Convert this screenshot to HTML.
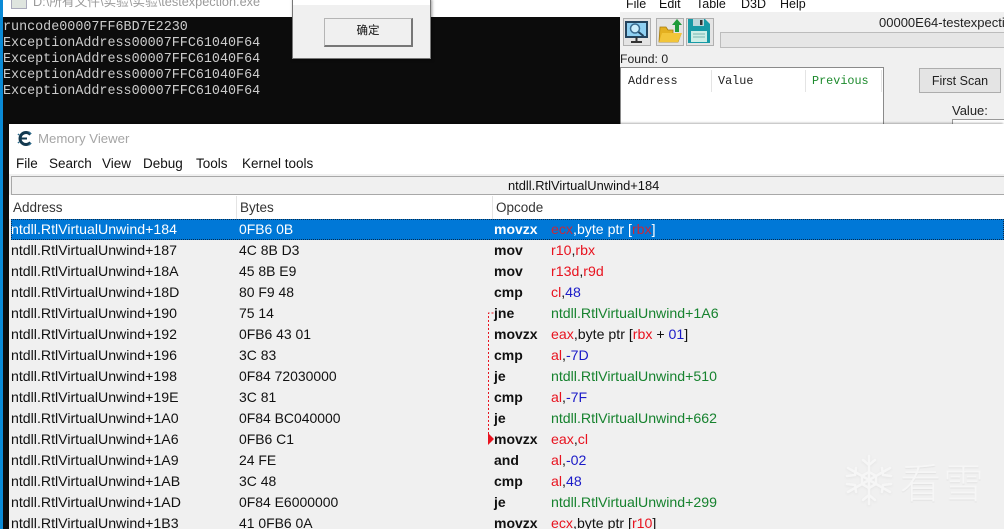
<!DOCTYPE html>
<html><head><meta charset="utf-8">
<style>
html,body{margin:0;padding:0;background:#fff}
#p{position:relative;width:1004px;height:529px;overflow:hidden;background:#0c0c0c;font-family:"Liberation Sans","Noto Sans CJK SC",sans-serif;font-size:13.5px;color:#111;filter:blur(.3px)}
.a{position:absolute}
.t{position:absolute;white-space:nowrap;line-height:16px}
.c{position:absolute;left:3px;color:#ccc;font:13.4px/16px "Liberation Mono",monospace;white-space:nowrap}
.m{position:absolute;font:11.8px/14px "Liberation Mono",monospace;white-space:nowrap}
.r{position:absolute;left:11px;width:993px;height:21px;line-height:21px;white-space:nowrap;color:#111;font-size:14.15px}
.r span{position:absolute;top:0}
.r .x{left:0}.r .y{left:228px;font-size:13.95px}.r .z{left:483px;font-weight:bold;font-size:14px}.r .w{left:540px}
.R{color:#e8131f}.B{color:#1a1ac8}.G{color:#16822e}
</style></head><body><div id="p">
<!-- console window -->
<div class="a" style="left:0;top:0;width:620px;height:17px;background:#fff"></div>
<div class="t" style="left:33px;top:-6px;color:#9a9a9a;font-size:12.7px">D:\所有文件\实验\实验\testexpection.exe</div>
<div class="a" style="left:11px;top:-4px;width:14px;height:11px;background:#dfe5df;border:1px solid #aab"></div>
<div class="c" style="top:20px">runcode00007FF6BD7E2230</div>
<div class="c" style="top:36px">ExceptionAddress00007FFC61040F64</div>
<div class="c" style="top:52px">ExceptionAddress00007FFC61040F64</div>
<div class="c" style="top:68px">ExceptionAddress00007FFC61040F64</div>
<div class="c" style="top:84px">ExceptionAddress00007FFC61040F64</div>
<div class="a" style="left:0;top:0;width:3px;height:529px;background:#0a8ad6"></div>
<!-- dialog -->
<div class="a" style="left:292px;top:-2px;width:137px;height:59px;background:#f0f0f0;border:1px solid #777;box-shadow:1px 1px 3px rgba(0,0,0,.4)"></div>
<div class="a" style="left:293px;top:-1px;width:137px;height:6px;background:#fff"></div>
<div class="a" style="left:324px;top:18px;width:86px;height:26px;background:#f0f0f0;border:1px solid #b5b5b5;border-right:2px solid #777;border-bottom:2px solid #777"></div>
<div class="t" style="left:324px;top:23px;width:88px;text-align:center;font-size:11.5px;color:#111">确定</div>
<!-- Cheat Engine -->
<div class="a" style="left:620px;top:0;width:384px;height:124px;background:#f0f0f0"></div>
<div class="a" style="left:620px;top:0;width:384px;height:12px;background:#fff"></div>
<div class="t" style="left:626px;top:-4px;font-size:12.5px">File</div>
<div class="t" style="left:659px;top:-4px;font-size:12.5px">Edit</div>
<div class="t" style="left:696px;top:-4px;font-size:12.5px">Table</div>
<div class="t" style="left:741px;top:-4px;font-size:12.5px">D3D</div>
<div class="t" style="left:780px;top:-4px;font-size:12.5px">Help</div>
<div class="a" style="left:623px;top:18px;width:26px;height:26px;background:#e4e4e4;border:1px solid #b0b0b0"></div>
<div class="a" style="left:656px;top:18px;width:26px;height:26px;background:#e4e4e4;border:1px solid #b0b0b0"></div>
<div class="a" style="left:686px;top:18px;width:26px;height:26px;background:#e4e4e4;border:1px solid #b0b0b0"></div>
<svg class="a" style="left:620px;top:14px" width="100" height="34" viewBox="0 0 100 34">
<rect x="6" y="8" width="21" height="15" fill="#8fd0f2" stroke="#24445e" stroke-width="2"/>
<circle cx="15" cy="14.5" r="4.5" fill="#cdeefc" stroke="#3a6c90" stroke-width="1.5"/><path d="M18.5 18l5 4" stroke="#24445e" stroke-width="2"/>
<path d="M16.500 23v4M11 28h11" stroke="#333" stroke-width="2"/>
<path d="M39 28l1-15h6l2 3h5v4h8l-3 8z" fill="#e4b020" stroke="#a67c10" stroke-width=".8"/>
<path d="M39 28l3-9h20l-4 9z" fill="#f2c53a"/>
<path d="M55 18v-7h-3l5-6 5 6h-3v7z" fill="#1e9a3a"/>
<path d="M68 5h17l5 5v19H68z" fill="#179aa6"/><rect x="73" y="5" width="11" height="7" fill="#bcd8dc"/><rect x="80" y="6" width="2.500" height="5" fill="#333"/><rect x="71" y="17" width="16" height="11" fill="#cdeee6"/><path d="M73 20h12M73 23h12" stroke="#79b5b0"/>
</svg>
<div class="t" style="left:879px;top:15px;font-size:13px;color:#222">00000E64-testexpection.exe</div>
<div class="a" style="left:720px;top:32px;width:290px;height:14px;background:#e6e6e6;border:1px solid #bcbcbc"></div>
<div class="t" style="left:620px;top:51px;font-size:12.2px;color:#222">Found: 0</div>
<div class="a" style="left:620px;top:67px;width:262px;height:60px;background:#fff;border:1px solid #8a8a8a"></div>
<div class="a" style="left:711px;top:70px;width:1px;height:22px;background:#e4e4e4"></div>
<div class="a" style="left:805px;top:70px;width:1px;height:22px;background:#e4e4e4"></div>
<div class="a" style="left:881px;top:70px;width:1px;height:22px;background:#e4e4e4"></div>
<div class="m" style="left:628px;top:74px;color:#222">Address</div>
<div class="m" style="left:718px;top:74px;color:#222">Value</div>
<div class="m" style="left:812px;top:74px;color:#1c8a2c">Previous</div>
<div class="a" style="left:919px;top:68px;width:80px;height:23px;background:#e4e4e4;border:1px solid #adadad"></div>
<div class="t" style="left:919px;top:73px;width:82px;text-align:center;font-size:12.5px;color:#222">First Scan</div>
<div class="t" style="left:952px;top:103px;font-size:13px;color:#222">Value:</div>
<div class="a" style="left:952px;top:119px;width:52px;height:6px;background:#fff;border:1px solid #999"></div>
<!-- Memory viewer -->
<div class="a" style="left:9px;top:124px;width:995px;height:405px;background:#f0f0f0;box-shadow:-1px -1px 2px rgba(0,0,0,.3)"></div>
<div class="a" style="left:9px;top:124px;width:995px;height:50px;background:#fff"></div>
<svg class="a" style="left:17px;top:130px" width="16" height="17" viewBox="0 0 16 17">
<path d="M13.500 4.500A6 6 0 1 0 13.500 12.500" fill="none" stroke="#12384e" stroke-width="3"/>
<path d="M4 8.500h6" stroke="#12384e" stroke-width="2"/><path d="M12 2l2 2M1 4l1 1M1 13l1-1M12 15l2-2" stroke="#2a6a8c" stroke-width="1.500"/>
</svg>
<div class="t" style="left:38px;top:131px;font-size:13.2px;color:#a5a5a5">Memory Viewer</div>
<div class="t" style="left:16px;top:156px">File</div>
<div class="t" style="left:49px;top:156px">Search</div>
<div class="t" style="left:102px;top:156px">View</div>
<div class="t" style="left:143px;top:156px">Debug</div>
<div class="t" style="left:196px;top:156px">Tools</div>
<div class="t" style="left:242px;top:156px">Kernel tools</div>
<div class="a" style="left:11px;top:176px;width:993px;height:17px;background:#f0f0f0;border:1px solid #a8a8a8;border-right:0"></div>
<div class="t" style="left:508px;top:178px;font-size:12.9px">ntdll.RtlVirtualUnwind+184</div>
<div class="a" style="left:9px;top:195px;width:995px;height:24px;background:#fff"></div>
<div class="a" style="left:236px;top:196px;width:1px;height:23px;background:#e4e4e4"></div>
<div class="a" style="left:492px;top:196px;width:1px;height:23px;background:#e4e4e4"></div>
<div class="t" style="left:13px;top:200px;color:#333">Address</div>
<div class="t" style="left:240px;top:200px;color:#333">Bytes</div>
<div class="t" style="left:496px;top:200px;color:#333">Opcode</div>

<div class="r" style="top:219px;background:#0078d7;color:#fff;outline:1px dotted #0a2a4a;outline-offset:-1px"><span class="x">ntdll.RtlVirtualUnwind+184</span><span class="y">0FB6 0B</span><span class="z">movzx</span><span class="w"><span style="position:static;color:#c8283a">ecx</span>,byte ptr [<span style="position:static;color:#c8283a">rbx</span>]</span></div>
<div class="r" style="top:240px"><span class="x">ntdll.RtlVirtualUnwind+187</span><span class="y">4C 8B D3</span><span class="z">mov</span><span class="w R">r10<span style="position:static;color:#111">,</span>rbx</span></div>
<div class="r" style="top:261px"><span class="x">ntdll.RtlVirtualUnwind+18A</span><span class="y">45 8B E9</span><span class="z">mov</span><span class="w R">r13d<span style="position:static;color:#111">,</span>r9d</span></div>
<div class="r" style="top:282px"><span class="x">ntdll.RtlVirtualUnwind+18D</span><span class="y">80 F9 48</span><span class="z">cmp</span><span class="w R">cl<span style="position:static;color:#111">,</span><span style="position:static" class="B">48</span></span></div>
<div class="r" style="top:303px"><span class="x">ntdll.RtlVirtualUnwind+190</span><span class="y">75 14</span><span class="z">jne</span><span class="w G">ntdll.RtlVirtualUnwind+1A6</span></div>
<div class="r" style="top:324px"><span class="x">ntdll.RtlVirtualUnwind+192</span><span class="y">0FB6 43 01</span><span class="z">movzx</span><span class="w R">eax<span style="position:static;color:#111">,byte ptr [</span>rbx<span style="position:static;color:#111"> + </span><span style="position:static" class="B">01</span><span style="position:static;color:#111">]</span></span></div>
<div class="r" style="top:345px"><span class="x">ntdll.RtlVirtualUnwind+196</span><span class="y">3C 83</span><span class="z">cmp</span><span class="w R">al<span style="position:static;color:#111">,</span><span style="position:static" class="B">-7D</span></span></div>
<div class="r" style="top:366px"><span class="x">ntdll.RtlVirtualUnwind+198</span><span class="y">0F84 72030000</span><span class="z">je</span><span class="w G">ntdll.RtlVirtualUnwind+510</span></div>
<div class="r" style="top:387px"><span class="x">ntdll.RtlVirtualUnwind+19E</span><span class="y">3C 81</span><span class="z">cmp</span><span class="w R">al<span style="position:static;color:#111">,</span><span style="position:static" class="B">-7F</span></span></div>
<div class="r" style="top:408px"><span class="x">ntdll.RtlVirtualUnwind+1A0</span><span class="y">0F84 BC040000</span><span class="z">je</span><span class="w G">ntdll.RtlVirtualUnwind+662</span></div>
<div class="r" style="top:429px"><span class="x">ntdll.RtlVirtualUnwind+1A6</span><span class="y">0FB6 C1</span><span class="z">movzx</span><span class="w R">eax<span style="position:static;color:#111">,</span>cl</span></div>
<div class="r" style="top:450px"><span class="x">ntdll.RtlVirtualUnwind+1A9</span><span class="y">24 FE</span><span class="z">and</span><span class="w R">al<span style="position:static;color:#111">,</span><span style="position:static" class="B">-02</span></span></div>
<div class="r" style="top:471px"><span class="x">ntdll.RtlVirtualUnwind+1AB</span><span class="y">3C 48</span><span class="z">cmp</span><span class="w R">al<span style="position:static;color:#111">,</span><span style="position:static" class="B">48</span></span></div>
<div class="r" style="top:492px"><span class="x">ntdll.RtlVirtualUnwind+1AD</span><span class="y">0F84 E6000000</span><span class="z">je</span><span class="w G">ntdll.RtlVirtualUnwind+299</span></div>
<div class="r" style="top:513px"><span class="x">ntdll.RtlVirtualUnwind+1B3</span><span class="y">41 0FB6 0A</span><span class="z">movzx</span><span class="w R">ecx<span style="position:static;color:#111">,byte ptr [</span>r10<span style="position:static;color:#111">]</span></span></div>
<!-- jump line -->
<svg class="a" style="left:484px;top:308px" width="14" height="140" viewBox="0 0 14 140">
<path d="M9.500 5H4.500V131" fill="none" stroke="#e8131f" stroke-dasharray="2 2"/>
<path d="M4 125l6 6-6 6z" fill="#e8131f"/>
</svg>
<!-- watermark -->
<svg class="a" style="left:842px;top:452px" width="54" height="56" viewBox="0 0 54 56">
<g fill="none" stroke="#f6f6f6" stroke-width="2.500" stroke-linecap="round" style="filter:drop-shadow(0 1px 1px #e4e4e4)">
<path d="M27 4v48M6 16l42 24M6 40l42-24"/><path d="M27 20l7 4v8l-7 4-7-4v-8z"/>
<path d="M21 8l6 5 6-5M21 48l6-5 6 5M5 24l8-1 1-7M49 24l-8-1-1-7M5 32l8 1 1 7M49 32l-8 1-1 7"/></g></svg>
<div class="t" style="left:900px;top:456px;font-size:41px;line-height:48px;color:#f6f6f6;letter-spacing:2px;font-family:'Noto Sans CJK SC',sans-serif;font-weight:300;text-shadow:0 1px 1px #e2e2e2">看雪</div>
</div></body></html>
